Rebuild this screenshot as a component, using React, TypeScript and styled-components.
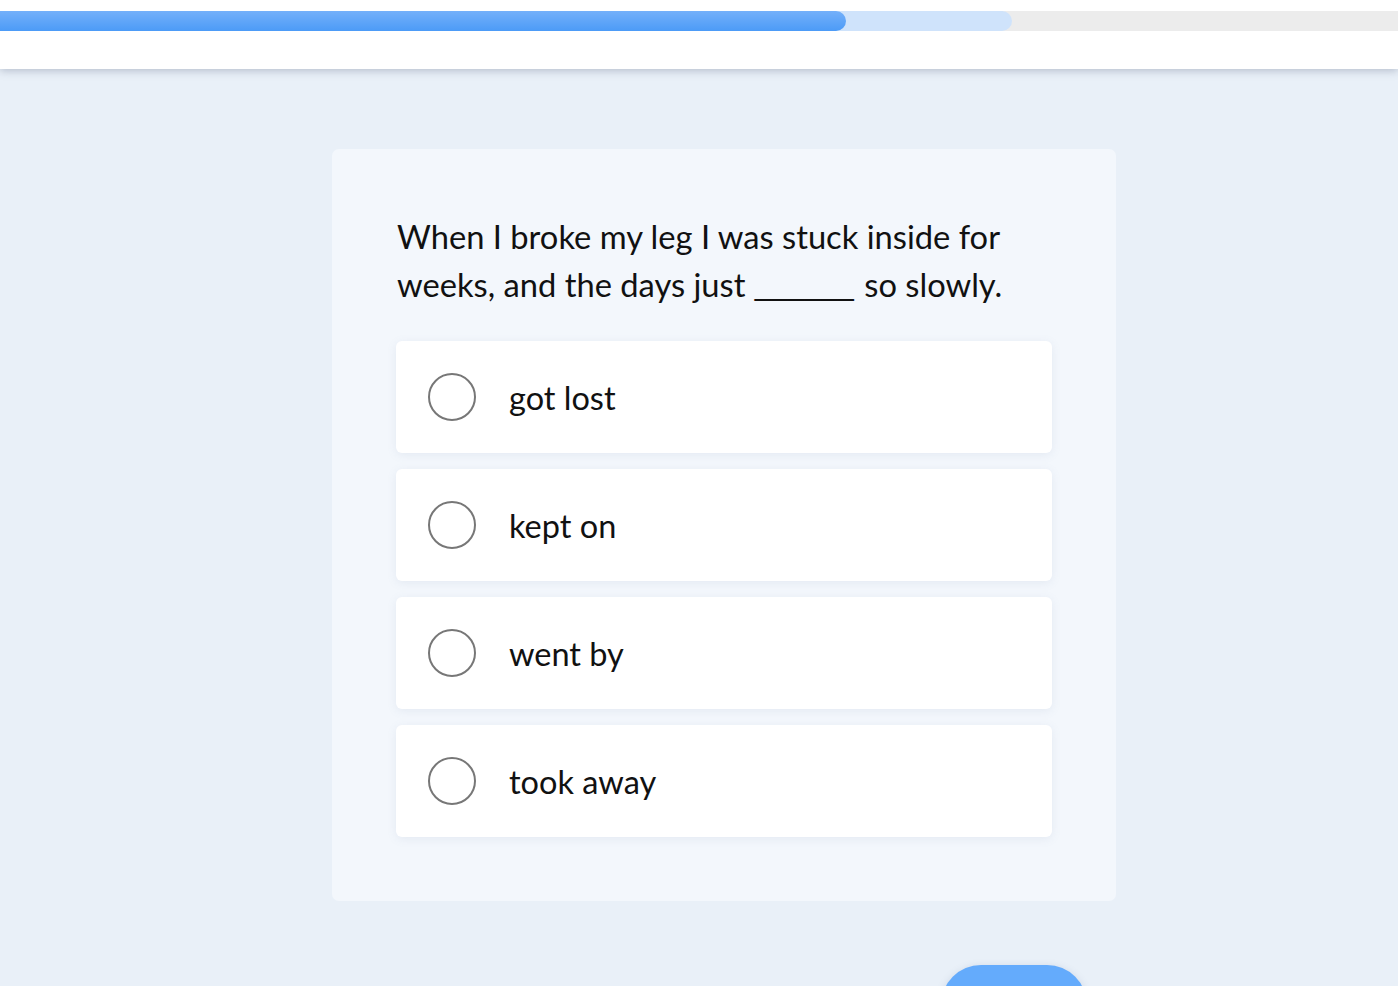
import React from "react";
import styled, { createGlobalStyle } from "styled-components";

const Global = createGlobalStyle`
  html, body { margin: 0; padding: 0; }
  body {
    background: #e9f0f8;
    font-family: Lato, "Noto Sans", Arial, sans-serif;
    color: #111;
    overflow: hidden;
  }
`;

const Page = styled.div`
  min-height: 986px;
  display: flex;
  flex-direction: column;
  align-items: stretch;
`;

const Header = styled.header`
  height: 69px;
  background: #fff;
  box-shadow: 0 2px 8px rgba(90, 100, 130, 0.35);
  padding-top: 11px;
  box-sizing: border-box;
  position: relative;
  z-index: 1;
`;

const Track = styled.div`
  height: 20px;
  background: #ececec;
  position: relative;
`;

const Fill = styled.div<{ $color: string }>`
  position: absolute;
  left: 0;
  top: 0;
  bottom: 0;
  border-radius: 0 10px 10px 0;
  background: ${(p) => p.$color};
`;

const Main = styled.main`
  display: flex;
  flex-direction: column;
  align-items: center;
  padding-top: 80px;
  margin-left: 50px;
`;

const Card = styled.section`
  width: 784px;
  box-sizing: border-box;
  background: #f3f7fc;
  border-radius: 7px;
  padding: 64px;
`;

const Question = styled.p`
  margin: 0 0 32px 1px;
  font-size: 32.7px;
  line-height: 48px;
`;

const Blank = styled.span`
  font-family: "Liberation Sans", Arial, sans-serif;
  font-size: 29.7px;
  line-height: 0;
  margin: 0 2px 0 1px;
  vertical-align: 2px;
`;

const Options = styled.div`
  display: flex;
  flex-direction: column;
  gap: 16px;
`;

const Option = styled.label`
  height: 112px;
  background: #fff;
  border-radius: 6px;
  box-shadow: 0 2px 10px rgba(120, 140, 170, 0.12);
  display: flex;
  align-items: center;
  padding-left: 32px;
  gap: 33px;
  cursor: pointer;
`;

const Radio = styled.span`
  width: 44px;
  height: 44px;
  border: 2px solid #777;
  border-radius: 50%;
  flex: none;
`;

const OptionText = styled.span`
  font-size: 32.5px;
  line-height: 1;
  padding-top: 2px;
`;

const Footer = styled.div`
  width: 784px;
  display: flex;
  justify-content: flex-end;
  padding-top: 64px;
  padding-right: 29px;
  box-sizing: border-box;
`;

const Button = styled.button`
  width: 146px;
  height: 80px;
  border: none;
  border-radius: 40px;
  background: #64abfc;
  box-shadow: 0 2px 8px rgba(80, 100, 140, 0.2);
`;

const options = ["got lost", "kept on", "went by", "took away"];

export default function App() {
  return (
    <Page>
      <Global />
      <Header>
        <Track>
          <Fill $color="#cfe3fb" style={{ width: 1012 }} />
          <Fill
            $color="linear-gradient(180deg, #74b0fa 0%, #4c9bf7 100%)"
            style={{ width: 846 }}
          />
        </Track>
      </Header>
      <Main>
        <Card>
          <Question>
            When I broke my leg I was stuck inside for weeks, and the days just{" "}
            <Blank>______</Blank> so slowly.
          </Question>
          <Options>
            {options.map((o) => (
              <Option key={o}>
                <Radio />
                <OptionText>{o}</OptionText>
              </Option>
            ))}
          </Options>
        </Card>
        <Footer>
          <Button />
        </Footer>
      </Main>
    </Page>
  );
}
